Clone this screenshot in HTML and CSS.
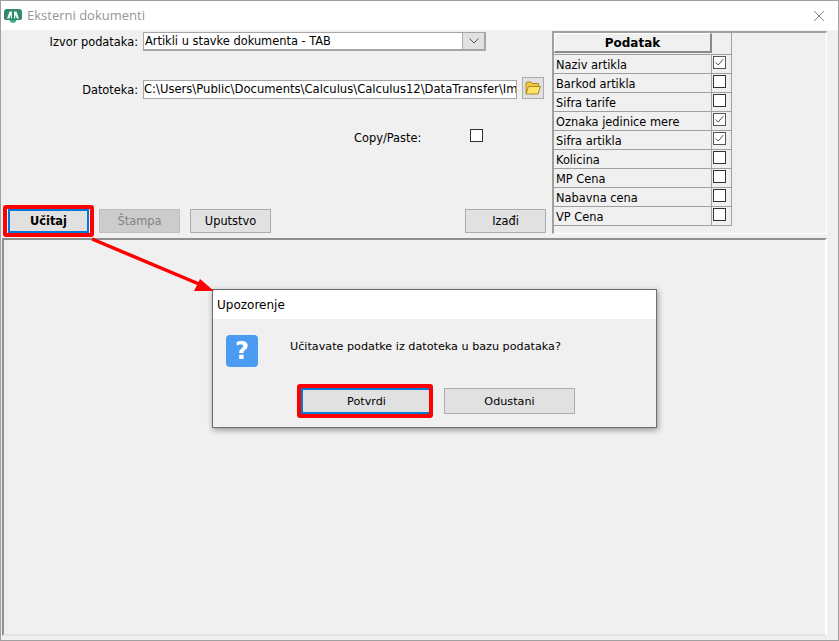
FILE: index.html
```html
<!DOCTYPE html>
<html lang="sr">
<head>
<meta charset="utf-8">
<title>Eksterni dokumenti</title>
<link rel="stylesheet" href="styles.css">
</head>
<body>
<div class="window">
  <header class="titlebar">
    <svg class="logo" viewBox="0 0 18 14" width="18" height="14">
      <path d="M3 0H15Q18 0 18 3V9Q18 11 15 11H12.500L11 13.500H7L5.500 11H3Q0 11 0 9V3Q0 0 3 0Z" fill="#2f8a6c"/>
      <path d="M7 13.500H11L12 11.500H6Z" fill="#3fc47f"/>
      <path d="M3 9.500L5.500 2.500H8V9.500H6.800V6L5.200 9.500ZM15 9.500L12.500 2.500H10V9.500H11.200V6L12.800 9.500Z" fill="#e9f5ef"/>
    </svg>
    <span class="title">Eksterni dokumenti</span>
    <svg class="close" viewBox="0 0 10 10" width="10" height="10"><path d="M0 0L10 10M10 0L0 10" stroke="#777" stroke-width="0.9" fill="none"/></svg>
  </header>
  <section class="top">
    <div class="form">
      <div class="row row-source">
        <label class="label">Izvor podataka:</label>
        <div class="combo"><span class="combo-text">Artikli u stavke dokumenta - TAB</span>
          <span class="combo-btn"><svg viewBox="0 0 10 6" width="10" height="6"><path d="M0.500 0.500L5 5L9.500 0.500" stroke="#555" fill="none"/></svg></span>
        </div>
      </div>
      <div class="row row-file">
        <label class="label">Datoteka:</label>
        <div class="input">C:\Users\Public\Documents\Calculus\Calculus12\DataTransfer\Import</div>
        <button class="folder">
          <svg viewBox="0 0 16 14" width="16" height="14">
            <path d="M1 12.500V2L2 1H6L7.500 2.500H13.500V5" fill="#f3c93a" stroke="#a98a2a"/>
            <path d="M1 13L3.500 5.500H15.500L13 13Z" fill="#ffe36a" stroke="#a98a2a"/>
          </svg>
        </button>
      </div>
      <div class="row row-copy">
        <label class="copy-label">Copy/Paste:</label>
        <span class="check check-plain"></span>
      </div>
      <div class="actions">
        <button class="btn btn-default">Učitaj</button>
        <button class="btn btn-disabled">Štampa</button>
        <button class="btn">Uputstvo</button>
        <button class="btn btn-exit">Izađi</button>
      </div>
    </div>
    <div class="grid-panel">
      <div class="grid">
        <div class="grid-head"><span class="grid-head-btn">Podatak</span></div><div class="grid-head-end"></div>
        <div class="cell">Naziv artikla</div><div class="cell-check"><span class="check on"><svg viewBox="0 0 13 13" width="11" height="11"><path d="M2 6.500L5 9.500L11 2.500" stroke="#444" stroke-width="1.100" fill="none"/></svg></span></div>
        <div class="cell">Barkod artikla</div><div class="cell-check"><span class="check"></span></div>
        <div class="cell">Sifra tarife</div><div class="cell-check"><span class="check"></span></div>
        <div class="cell">Oznaka jedinice mere</div><div class="cell-check"><span class="check on"><svg viewBox="0 0 13 13" width="11" height="11"><path d="M2 6.500L5 9.500L11 2.500" stroke="#444" stroke-width="1.100" fill="none"/></svg></span></div>
        <div class="cell">Sifra artikla</div><div class="cell-check"><span class="check on"><svg viewBox="0 0 13 13" width="11" height="11"><path d="M2 6.500L5 9.500L11 2.500" stroke="#444" stroke-width="1.100" fill="none"/></svg></span></div>
        <div class="cell">Kolicina</div><div class="cell-check"><span class="check"></span></div>
        <div class="cell">MP Cena</div><div class="cell-check"><span class="check"></span></div>
        <div class="cell">Nabavna cena</div><div class="cell-check"><span class="check"></span></div>
        <div class="cell">VP Cena</div><div class="cell-check"><span class="check"></span></div>
      </div>
    </div>
  </section>
  <main class="lower"></main>

  <div class="dialog">
    <div class="dialog-title">Upozorenje</div>
    <div class="dialog-body">
      <div class="dialog-msg">
        <span class="q-icon">?</span>
        <span class="msg">Učitavate podatke iz datoteka u bazu podataka?</span>
      </div>
      <div class="dialog-actions">
        <button class="btn btn-dlg btn-default-dlg">Potvrdi</button>
        <button class="btn btn-dlg">Odustani</button>
      </div>
    </div>
  </div>

  <div class="mark mark-load"></div>
  <div class="mark mark-confirm"></div>
  <svg class="arrow" viewBox="0 0 130 60" width="130" height="60">
    <path d="M3 3L110 48" stroke="#f00" stroke-width="3.500" fill="none"/>
    <path d="M125 55L111 43L105 55Z" fill="#f00"/>
  </svg>
</div>
</body>
</html>
```
FILE: styles.css
```css
* { box-sizing: border-box; }
html, body { margin: 0; padding: 0; }
body { font-family: "DejaVu Sans", Verdana, sans-serif; font-size: 11.4px; color: #000; background: #f0f0f0; }
button { font: inherit; color: inherit; padding: 0; margin: 0; }

.window {
  position: relative;
  width: 839px;
  height: 641px;
  overflow: hidden;
  display: flex;
  flex-direction: column;
  background: #f0f0f0;
  border: 1px solid #a0a0a0;
}

.titlebar {
  height: 29px;
  flex: none;
  background: #fff;
  display: flex;
  align-items: center;
  padding: 0 14px 0 3px;
}
.logo { flex: none; }
.title { margin: -2px 0 0 5px; color: #969696; font-family: "Open Sans", sans-serif; font-size: 13px; }
.close { margin-left: auto; }

.top { display: flex; height: 208px; flex: none; }
.form { width: 551px; flex: none; display: flex; flex-direction: column; }

.row { display: flex; align-items: center; }
.row-source { margin-top: 2px; height: 19px; }
.row-file { margin-top: 29px; height: 19px; }
.row-copy { margin-top: 28px; height: 19px; }
.label { width: 137px; text-align: right; flex: none; margin-right: 5px; }

.combo { width: 343px; height: 19px; background: #fff; border: 1px solid #a6a6a6; border-right-width: 2px; border-bottom-width: 2px; display: flex; align-items: center; }
.combo-text { flex: 1; padding-left: 1px; }
.combo-btn { width: 22px; height: 100%; flex: none; background: #e1e1e1; border-left: 1px solid #adadad; display: flex; align-items: center; justify-content: center; }

.input { width: 374px; height: 19px; background: #fff; border: 1px solid #a6a6a6; line-height: 17px; font-size: 11.6px; white-space: nowrap; overflow: hidden; }
.folder { width: 22px; height: 22px; margin: -3px 0 0 5px; background: #e1e1e1; border: 1px solid #adadad; display: flex; align-items: center; justify-content: center; flex: none; }

.copy-label { margin: 2px 0 0 353px; width: 116px; }
.check { width: 13px; height: 13px; background: #fff; border: 1px solid #333; display: block; flex: none; }
.check-plain { margin-top: -3px; }
.check.on { border-color: #555; display: flex; align-items: center; justify-content: center; }

.actions { margin-top: auto; margin-bottom: 5px; padding: 0 6px 0 7px; display: flex; gap: 10px; }
.btn { width: 81px; height: 24px; background: #e1e1e1; border: 1px solid #adadad; }
.btn-default { border: 2px solid #0078d7; font-weight: bold; }
.btn-disabled { background: #cccccc; border-color: #bfbfbf; color: #838383; }
.btn-exit { margin-left: auto; }

.grid-panel { flex: 1; margin: 1px 11px 4px 0; border-top: 2px solid #a0a0a0; border-left: 2px solid #a0a0a0; border-right: 1px solid #fff; border-bottom: 1px solid #fff; }
.grid { display: grid; grid-template-columns: 158px 20px; grid-template-rows: 22px; grid-auto-rows: 19px; width: 178px; }
.grid-head { border-bottom: 1px solid #a0a0a0; padding-bottom: 1px; }
.grid-head-btn { height: 100%; padding-top: 1px; background: #f0f0f0; border: 1px solid #fff; border-right: 2px solid #8a8a8a; border-bottom: 2px solid #8a8a8a; font-weight: bold; font-size: 12px; display: flex; align-items: center; justify-content: center; }
.grid-head-end { border-right: 1px solid #a0a0a0; border-bottom: 1px solid #a0a0a0; }
.cell { border-right: 1px solid #a0a0a0; border-bottom: 1px solid #a0a0a0; padding-left: 2px; line-height: 20px; white-space: nowrap; overflow: hidden; }
.cell-check { border-right: 1px solid #a0a0a0; border-bottom: 1px solid #a0a0a0; padding: 1px 0 0 1px; }

.lower { flex: 1; margin: 0 11px 4px 1px; border-top: 2px solid #8f8f8f; border-left: 2px solid #8f8f8f; border-right: 2px solid #fff; border-bottom: 2px solid #e3e3e3; }

.dialog { position: absolute; left: 211px; top: 288px; width: 445px; height: 139px; background: #f0f0f0; border: 1px solid #6e6e6e; box-shadow: 1px 2px 6px rgba(0,0,0,.4); display: flex; flex-direction: column; font-size: 11.2px; }
.dialog-title { height: 29px; background: #fff; padding-left: 4px; line-height: 30px; font-size: 12px; flex: none; }
.dialog-body { flex: 1; display: flex; flex-direction: column; }
.dialog-msg { display: flex; align-items: center; padding: 16px 0 0 13px; }
.q-icon { width: 32px; height: 32px; border-radius: 4px; background: #4b9bf2; color: #fff; font: bold 24px/32px "DejaVu Sans", sans-serif; text-align: center; flex: none; }
.msg { margin-left: 32px; margin-top: -10px; }
.dialog-actions { display: flex; gap: 12px; padding: 21px 0 0 88px; }
.btn-dlg { width: 131px; height: 26px; }
.btn-default-dlg { border: 2px solid #0078d7; }

.mark { position: absolute; border: 4px solid #f00; border-radius: 3px; }
.mark-load { left: 2px; top: 204px; width: 91px; height: 32px; }
.mark-confirm { left: 296px; top: 383px; width: 136px; height: 34px; }
.arrow { position: absolute; left: 88px; top: 235px; }
```
